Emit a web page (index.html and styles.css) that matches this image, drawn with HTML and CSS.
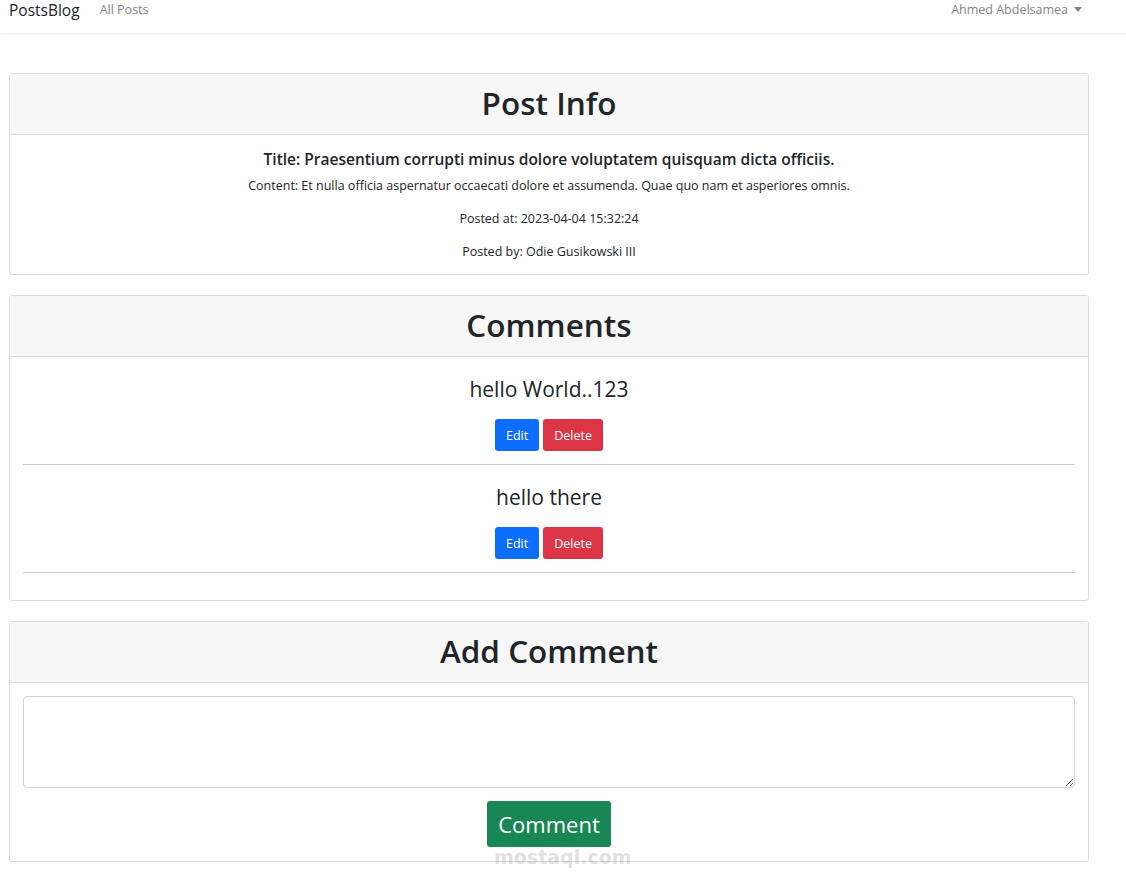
FILE: index.html
```html
<!DOCTYPE html>
<html lang="en">
<head>
<meta charset="utf-8">
<title>PostsBlog</title>
<link rel="stylesheet" href="styles.css">
</head>
<body>
<nav class="navbar">
  <div class="nav-left">
    <a class="brand" href="#">PostsBlog</a>
    <a class="nav-link" href="#">All Posts</a>
  </div>
  <a class="nav-link user" href="#">Ahmed Abdelsamea <span class="caret"></span></a>
</nav>
<main class="main">
  <section class="card">
    <header class="card-header"><h2>Post Info</h2></header>
    <div class="card-body info">
      <p class="post-title">Title: Praesentium corrupti minus dolore voluptatem quisquam dicta officiis.</p>
      <p class="small">Content: Et nulla officia aspernatur occaecati dolore et assumenda. Quae quo nam et asperiores omnis.</p>
      <p class="small">Posted at: 2023-04-04 15:32:24</p>
      <p class="small">Posted by: Odie Gusikowski III</p>
    </div>
  </section>
  <section class="card">
    <header class="card-header"><h2>Comments</h2></header>
    <div class="card-body comments">
      <div class="comment">
        <p class="comment-text">hello World..123</p>
        <div class="actions"><button class="btn btn-blue">Edit</button><button class="btn btn-red">Delete</button></div>
      </div>
      <div class="comment">
        <p class="comment-text">hello there</p>
        <div class="actions"><button class="btn btn-blue">Edit</button><button class="btn btn-red">Delete</button></div>
      </div>
    </div>
  </section>
  <section class="card">
    <header class="card-header"><h2>Add Comment</h2></header>
    <div class="card-body add">
      <textarea class="textarea"></textarea>
      <button class="btn btn-green">Comment</button>
    </div>
  </section>
</main>
<div class="watermark">mostaql.com</div>
</body>
</html>
```

FILE: styles.css
```css
* { box-sizing: border-box; }
body {
  margin: 0;
  font-family: "Open Sans", "Noto Sans", sans-serif;
  color: #212529;
  background: #fff;
}
.navbar {
  height: 33px;
  display: flex;
  align-items: flex-start;
  justify-content: space-between;
  padding: 0 44px 0 9px;
  background: #fff;
  box-shadow: 0 1px 3px rgba(0,0,0,.08);
}
.nav-left { display: flex; align-items: flex-start; gap: 20px; }
.brand {
  font-size: 15.5px;
  color: #212529;
  text-decoration: none;
  line-height: 20px;
}
.nav-link {
  font-size: 12.5px;
  color: #80858a;
  text-decoration: none;
  line-height: 19px;
}
.user { display: flex; align-items: center; gap: 6px; }
.caret {
  width: 0; height: 0;
  border-left: 4px solid transparent;
  border-right: 4px solid transparent;
  border-top: 5px solid #80858a;
  margin-top: -1px;
}
.main {
  padding: 40px 37px 30px 9px;
  display: flex;
  flex-direction: column;
  gap: 20px;
}
.card {
  border: 1px solid #dcdcdc;
  border-radius: 3px;
  background: #fff;
}
.card-header {
  background: #f7f7f7;
  border-bottom: 1px solid #dcdcdc;
  height: 61px;
  display: flex;
  align-items: center;
  justify-content: center;
  padding-bottom: 3px;
}
.card-header h2 {
  margin: 0;
  font-size: 31.5px;
  font-weight: 600;
  line-height: 40px;
}
.card-body { padding: 13px 13px; text-align: center; }
.info { padding: 13px 13px 12px; }
.info p { margin: 0 0 13px; }
.info p:last-child { margin-bottom: 0; }
.post-title { font-size: 15.5px; font-weight: 600; line-height: 22px; }
.info .post-title { margin-bottom: 6px; }
.small { font-size: 12.5px; line-height: 20px; }
.comments { padding: 13px 13px 27px; }
.comment {
  border-bottom: 1px solid #c8c8c8;
  padding: 4px 0 13px;
  margin-bottom: 13px;
}
.comment:last-child { margin-bottom: 0; }
.comment-text { margin: 0 0 15px; font-size: 21px; line-height: 30px; }
.actions { display: flex; justify-content: center; gap: 4px; }
.btn {
  font-family: inherit;
  border: none;
  border-radius: 3px;
  color: #fff;
  font-size: 12.5px;
  height: 32px;
  padding: 0 11px;
}
.btn-blue { background: #0d6efd; }
.btn-red { background: #dc3545; }
.btn-green {
  background: #198754;
  font-size: 22px;
  height: 46px;
  padding: 0 11px;
  margin-top: 13px;
}
.add { padding: 13px 13px 14px; display: flex; flex-direction: column; align-items: center; }
.textarea {
  width: 100%;
  height: 92px;
  border: 1px solid #ced4da;
  border-radius: 4px;
  display: block;
  resize: vertical;
}
.watermark {
  position: absolute;
  left: 494px;
  top: 846px;
  font-family: "DejaVu Sans", sans-serif;
  font-weight: bold;
  font-size: 19px;
  color: rgba(150,150,150,.3);
}
```
